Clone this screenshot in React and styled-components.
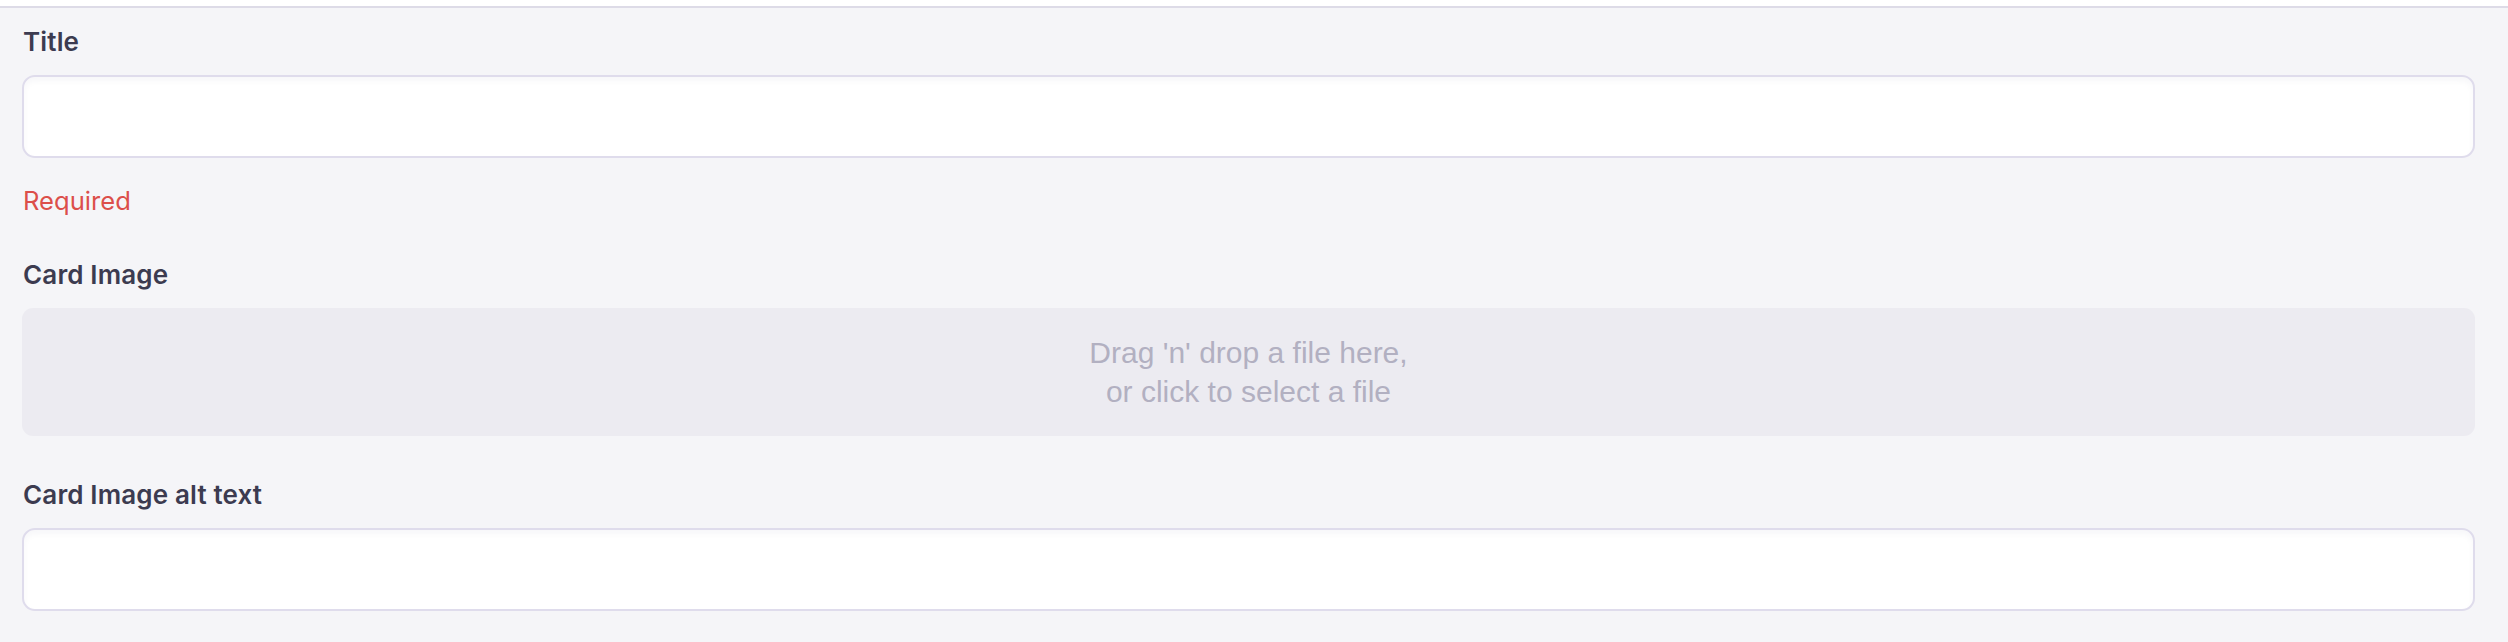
import styled, { createGlobalStyle } from 'styled-components';

const GlobalStyle = createGlobalStyle`
    html, body {
        margin: 0;
        padding: 0;
        background: #ffffff;
    }
    * {
        box-sizing: border-box;
    }
`;

const Form = styled.form`
    display: flex;
    flex-direction: column;
    margin-top: 6px;
    min-height: 636px;
    padding: 15px 33px 0 22px;
    border-top: 2px solid #dddbe7;
    background: #f5f5f8;
    font-family: Inter, "Noto Sans", sans-serif;
`;

const Field = styled.div`
    display: flex;
    flex-direction: column;
    margin-top: ${props => props.offset || 0}px;
`;

const Label = styled.label`
    margin: 0 0 14px 1px;
    color: #3c3b50;
    font-size: 26px;
    font-weight: 600;
    letter-spacing: 0.15px;
    line-height: 38px;
`;

const TextInput = styled.input`
    width: 100%;
    height: 83px;
    padding: 0 24px;
    border: 2px solid #dfdcec;
    border-radius: 13px;
    background: #ffffff;
    box-shadow: inset 0 4px 6px rgba(40, 36, 80, 0.035);
    font-family: inherit;
    font-size: 25.6px;
    color: #3c3b50;
    outline: none;
`;

const Error = styled.p`
    margin: 24px 0 0 1px;
    color: #dc4f4a;
    font-size: 25.6px;
    font-weight: 400;
    line-height: 38px;
`;

const Dropzone = styled.div`
    display: flex;
    flex-direction: column;
    align-items: center;
    justify-content: center;
    height: 128px;
    border-radius: 11px;
    background: #ecebf1;
    color: #b2b0c1;
    font-family: "Liberation Sans", Arial, sans-serif;
    font-size: 30px;
    line-height: 39px;
    text-align: center;
    cursor: pointer;
    span {
        display: block;
    }
`;

const App = () => (
    <>
        <GlobalStyle />
        <Form>
            <Field>
                <Label htmlFor="title">Title</Label>
                <TextInput id="title" type="text" />
                <Error>Required</Error>
            </Field>
            <Field offset={36}>
                <Label>Card Image</Label>
                <Dropzone>
                    <span>Drag 'n' drop a file here,</span>
                    <span>or click to select a file</span>
                </Dropzone>
            </Field>
            <Field offset={40}>
                <Label htmlFor="alt">Card Image alt text</Label>
                <TextInput id="alt" type="text" />
            </Field>
        </Form>
    </>
);

export default App;
